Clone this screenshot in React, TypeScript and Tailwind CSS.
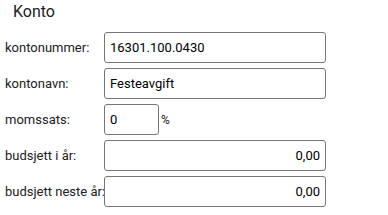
export default function App() {
  const rows = [
    { label: 'kontonummer:', value: '16301.100.0430', align: 'left', w: 'w-[222px]' },
    { label: 'kontonavn:', value: 'Festeavgift', align: 'left', w: 'w-[222px]' },
    { label: 'momssats:', value: '0', align: 'left', w: 'w-[55px]', suffix: '%' },
    { label: 'budsjett i år:', value: '0,00', align: 'right', w: 'w-[222px]' },
    { label: 'budsjett neste år:', value: '0,00', align: 'right', w: 'w-[222px]' },
  ];

  return (
    <div className="w-[388px] h-[215px] bg-white font-['Roboto',sans-serif] text-[#212121]">
      <h2 className="pl-[13px] pt-[1px] text-[16px] leading-[22px]">Konto</h2>
      <div className="mt-[9px] flex flex-col gap-[5px] pl-[5px]">
        {rows.map((r) => (
          <div key={r.label} className="flex items-center h-[31px]">
            <label className="w-[99px] shrink-0 whitespace-nowrap text-[13px] overflow-visible">
              {r.label}
            </label>
            <input
              readOnly
              value={r.value}
              className={`${r.w} h-[31px] border border-[#767676] rounded-[3px] px-[5px] text-[13px] text-black outline-none ${r.align === 'right' ? 'text-right' : 'text-left'}`}
            />
            {r.suffix && <span className="ml-[2px] text-[12px]">{r.suffix}</span>}
          </div>
        ))}
      </div>
    </div>
  );
}
